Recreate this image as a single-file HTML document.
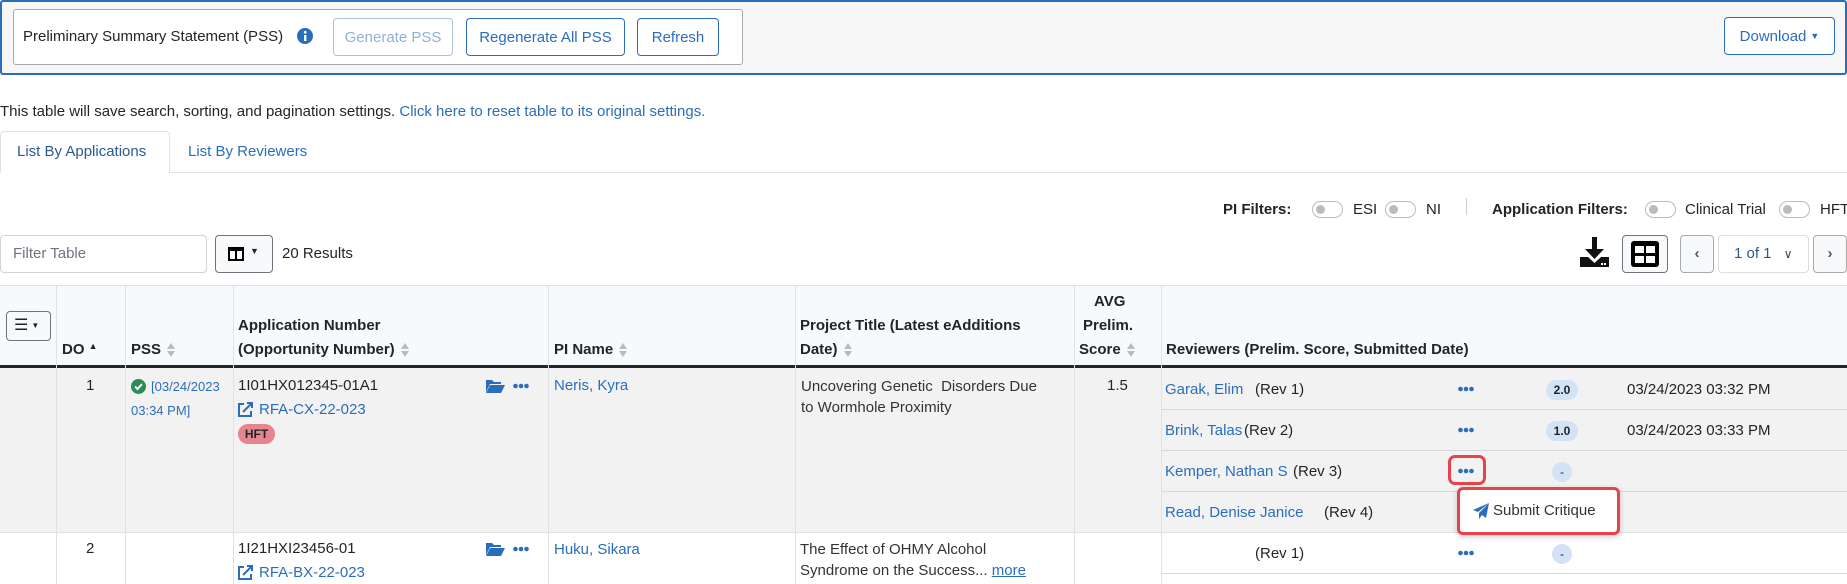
<!DOCTYPE html>
<html><head><meta charset="utf-8"><style>
*{box-sizing:border-box;margin:0;padding:0}
body{width:1847px;height:584px;overflow:hidden;background:#fff;font-family:"Liberation Sans",sans-serif;font-size:15px;color:#212529;position:relative}
.a{position:absolute;white-space:nowrap}
.lk{color:#2a6ebb}
.btn{position:absolute;border:1px solid #2a6ebb;border-radius:4px;color:#2a6ebb;display:flex;align-items:center;justify-content:center;background:#fff;font-size:15px}
.b{font-weight:bold}
.tg{position:absolute;width:31px;height:17px;border:1px solid #bbb;border-radius:9px;top:201px}
.tg:after{content:"";position:absolute;left:3px;top:3px;width:9px;height:9px;border-radius:50%;background:#bbb}
.vl{position:absolute;width:1px;background:#dee2e6}
.hl{position:absolute;height:1px;background:#dee2e6}
.dots{position:absolute;width:16px;height:6px}
.sc{position:absolute;background:#d3e3f5;border-radius:10px;font-size:12px;font-weight:bold;display:flex;align-items:center;justify-content:center;height:20px}
.sort{display:inline-block;width:8px;height:14px;vertical-align:middle;margin-left:6px}
</style></head><body>
<svg width="0" height="0" style="position:absolute"><defs><g id="so"><polygon points="0,6 4,0 8,6" fill="#bbb"/><polygon points="0,8 4,14 8,8" fill="#bbb"/></g><g id="dt"><circle cx="2.5" cy="3" r="2.3" fill="#2a6ebb"/><circle cx="8" cy="3" r="2.3" fill="#2a6ebb"/><circle cx="13.5" cy="3" r="2.3" fill="#2a6ebb"/></g></defs></svg>
<!-- top panel -->
<div class="a" style="left:0;top:0;width:1847px;height:75px;background:#f7f7f7;border:2px solid #2a6ebb;border-radius:3px"></div>
<div class="a" style="left:13px;top:9px;width:730px;height:56px;background:#fff;border:1px solid #aaa;border-radius:3px"></div>
<div class="a" style="left:23px;top:28px;font-size:15px">Preliminary Summary Statement (PSS)</div>
<svg class="a" style="left:297px;top:28px" width="16" height="16" viewBox="0 0 16 16"><circle cx="8" cy="8" r="8" fill="#2a6ebb"/><rect x="7" y="7" width="2.4" height="6" fill="#fff"/><circle cx="8.2" cy="4.3" r="1.4" fill="#fff"/></svg>
<div class="btn" style="left:333px;top:18px;width:120px;height:38px;color:#8fb0d8;border-color:#a9c3e3">Generate PSS</div>
<div class="btn" style="left:466px;top:18px;width:159px;height:38px">Regenerate All PSS</div>
<div class="btn" style="left:637px;top:18px;width:82px;height:38px">Refresh</div>
<div class="btn" style="left:1724px;top:17px;width:111px;height:38px">Download <span style="font-size:9px;margin-left:4px">▼</span></div>

<div class="a" style="left:0;top:103px">This table will save search, sorting, and pagination settings. <span class="lk">Click here to reset table to its original settings.</span></div>
<!-- tabs -->
<div class="hl" style="left:0;top:172px;width:1847px"></div>
<div class="a" style="left:0;top:131px;width:170px;height:42px;border:1px solid #dee2e6;border-bottom:none;border-radius:4px 4px 0 0;background:#fff"></div>
<div class="a lk" style="left:17px;top:143px;color:#2a5a8f">List By Applications</div>
<div class="a lk" style="left:188px;top:143px">List By Reviewers</div>
<!-- filters -->
<div class="a b" style="left:1223px;top:201px">PI Filters:</div>
<div class="tg" style="left:1312px"></div><div class="a" style="left:1353px;top:201px">ESI</div>
<div class="tg" style="left:1385px"></div><div class="a" style="left:1426px;top:201px">NI</div>
<div class="a" style="left:1466px;top:198px;width:1px;height:17px;background:#ccc"></div>
<div class="a b" style="left:1492px;top:201px">Application Filters:</div>
<div class="tg" style="left:1645px"></div><div class="a" style="left:1685px;top:201px">Clinical Trial</div>
<div class="tg" style="left:1779px"></div><div class="a" style="left:1820px;top:201px">HFT</div>
<!-- toolbar -->
<div class="a" style="left:0;top:235px;width:207px;height:38px;border:1px solid #ced4da;border-radius:4px"></div>
<div class="a" style="left:13px;top:245px;color:#6c757d">Filter Table</div>
<div class="a" style="left:215px;top:235px;width:58px;height:38px;border:1px solid #6c757d;border-radius:4px;background:#f8f9fa"></div>
<svg class="a" style="left:228px;top:247px" width="16" height="14"><rect x="1" y="1" width="14" height="12" fill="none" stroke="#000" stroke-width="2"/><rect x="1" y="1" width="14" height="3" fill="#000"/><line x1="8" y1="1" x2="8" y2="13" stroke="#000" stroke-width="2"/></svg>
<div class="a" style="left:250px;top:246px;font-size:9px">▼</div>
<div class="a" style="left:282px;top:245px">20 Results</div>
<svg class="a" style="left:1580px;top:237px" width="30" height="32" viewBox="0 0 30 32"><rect x="12" y="0" width="5" height="14" fill="#111"/><polygon points="5,12 24,12 14.5,22" fill="#111"/><polygon points="0,20 8,20 14.5,26 21,20 29,20 29,30 0,30" fill="#111"/><rect x="21" y="26" width="2" height="2" fill="#fff"/><rect x="24" y="26" width="2" height="2" fill="#fff"/></svg>
<div class="a" style="left:1622px;top:235px;width:46px;height:38px;border:1px solid #6c757d;border-radius:4px;background:#f8f9fa"></div>
<svg class="a" style="left:1631px;top:241px" width="28" height="26"><rect x="0" y="0" width="28" height="26" rx="3" fill="#000"/><rect x="4" y="5" width="9" height="7" fill="#fff"/><rect x="15" y="5" width="9" height="7" fill="#fff"/><rect x="4" y="15" width="9" height="7" fill="#fff"/><rect x="15" y="15" width="9" height="7" fill="#fff"/></svg>
<div class="a" style="left:1680px;top:235px;width:34px;height:38px;border:1px solid #aaa;border-radius:4px;background:#f8f9fa;text-align:center;line-height:36px;font-weight:bold;color:#555">‹</div>
<div class="a" style="left:1718px;top:235px;width:91px;height:38px;border:1px solid #ddd;border-radius:4px;line-height:36px;padding-left:15px;color:#2a5a8f">1 of 1 <span style="color:#444;margin-left:8px;font-size:12px">∨</span></div>
<div class="a" style="left:1813px;top:235px;width:34px;height:38px;border:1px solid #aaa;border-radius:4px;background:#f8f9fa;text-align:center;line-height:36px;font-weight:bold;color:#555">›</div>
<!-- table header -->
<div class="a" style="left:0;top:285px;width:1847px;height:80px;background:#f8f9fa;border-top:1px solid #dee2e6"></div>
<div class="a" style="left:0;top:365px;width:1847px;height:3px;background:#212529"></div>
<div class="a" style="left:0;top:368px;width:1847px;height:164px;background:#f2f2f2"></div>
<div class="hl" style="left:0;top:532px;width:1847px"></div>
<div class="vl" style="left:56px;top:285px;height:299px"></div>
<div class="vl" style="left:125px;top:285px;height:299px"></div>
<div class="vl" style="left:233px;top:285px;height:299px"></div>
<div class="vl" style="left:548px;top:285px;height:299px"></div>
<div class="vl" style="left:795px;top:285px;height:299px"></div>
<div class="vl" style="left:1074px;top:285px;height:299px"></div>
<div class="vl" style="left:1161px;top:285px;height:299px"></div>
<div class="a" style="left:6px;top:311px;width:45px;height:30px;border:1px solid #6c757d;border-radius:4px;font-size:16px;padding-left:7px;line-height:27px">☰<span style="font-size:8px;margin-left:3px;vertical-align:middle">▼</span></div>
<div class="a b" style="left:62px;top:341px">DO <span style="font-size:9px;vertical-align:top">▲</span></div>
<div class="a b" style="left:131px;top:341px">PSS<svg class="sort"><use href="#so"/></svg></div>
<div class="a b" style="left:238px;top:317px">Application Number</div>
<div class="a b" style="left:238px;top:341px">(Opportunity Number)<svg class="sort"><use href="#so"/></svg></div>
<div class="a b" style="left:554px;top:341px">PI Name<svg class="sort"><use href="#so"/></svg></div>
<div class="a b" style="left:800px;top:317px">Project Title (Latest eAdditions</div>
<div class="a b" style="left:800px;top:341px">Date)<svg class="sort"><use href="#so"/></svg></div>
<div class="a b" style="left:1094px;top:293px">AVG</div>
<div class="a b" style="left:1083px;top:317px">Prelim.</div>
<div class="a b" style="left:1079px;top:341px">Score<svg class="sort"><use href="#so"/></svg></div>
<div class="a b" style="left:1166px;top:341px">Reviewers (Prelim. Score, Submitted Date)</div>
<!-- row 1 -->
<div class="a" style="left:86px;top:377px">1</div>
<svg class="a" style="left:131px;top:379px" width="15" height="15"><circle cx="7.5" cy="7.5" r="7.5" fill="#2e8b57"/><polyline points="4,7.5 6.5,10 11,5" fill="none" stroke="#fff" stroke-width="2"/></svg>
<div class="a lk" style="left:151px;top:379px;font-size:13px">[03/24/2023</div>
<div class="a lk" style="left:131px;top:403px;font-size:13px">03:34 PM]</div>
<div class="a" style="left:238px;top:377px">1I01HX012345-01A1</div>
<svg class="a" style="left:486px;top:379px" width="19" height="14" viewBox="0 0 19 14"><path d="M0 1h6l2 2h7v2H4L0 13z" fill="#2a6ebb"/><path d="M4 6h15l-4 8H0z" fill="#2a6ebb"/></svg>
<svg class="dots" style="left:513px;top:383px"><use href="#dt"/></svg>
<svg class="a" style="left:238px;top:402px" width="15" height="15" viewBox="0 0 15 15"><path d="M6 2H1v12h12V9" fill="none" stroke="#2a6ebb" stroke-width="2"/><path d="M5 10L14 1M9 1h5v5" fill="none" stroke="#2a6ebb" stroke-width="2"/></svg>
<div class="a lk" style="left:259px;top:401px">RFA-CX-22-023</div>
<div class="a" style="left:238px;top:424px;width:37px;height:20px;border-radius:10px;background:#e8848d;font-size:12px;font-weight:bold;text-align:center;line-height:20px">HFT</div>
<div class="a lk" style="left:554px;top:377px">Neris, Kyra</div>
<div class="a" style="left:801px;top:378px;color:#333">Uncovering Genetic&nbsp; Disorders Due</div>
<div class="a" style="left:801px;top:399px;color:#333">to Wormhole Proximity</div>
<div class="a" style="left:1107px;top:377px">1.5</div>
<div class="hl" style="left:1161px;top:409px;width:686px;background:#d6d8db"></div>
<div class="hl" style="left:1161px;top:450px;width:686px;background:#d6d8db"></div>
<div class="hl" style="left:1161px;top:491px;width:686px;background:#d6d8db"></div>
<div class="a lk" style="left:1165px;top:381px">Garak, Elim</div><div class="a" style="left:1255px;top:381px">(Rev 1)</div>
<svg class="dots" style="left:1458px;top:386px"><use href="#dt"/></svg>
<div class="sc" style="left:1546px;top:380px;width:32px">2.0</div>
<div class="a" style="left:1627px;top:381px">03/24/2023 03:32 PM</div>
<div class="a lk" style="left:1165px;top:422px">Brink, Talas</div><div class="a" style="left:1244px;top:422px">(Rev 2)</div>
<svg class="dots" style="left:1458px;top:427px"><use href="#dt"/></svg>
<div class="sc" style="left:1546px;top:421px;width:32px">1.0</div>
<div class="a" style="left:1627px;top:422px">03/24/2023 03:33 PM</div>
<div class="a lk" style="left:1165px;top:463px">Kemper, Nathan S</div><div class="a" style="left:1293px;top:463px">(Rev 3)</div>
<div class="a" style="left:1448px;top:455px;width:38px;height:30px;border:3px solid #e8434a;border-radius:7px"></div>
<svg class="dots" style="left:1458px;top:468px"><use href="#dt"/></svg>
<div class="sc" style="left:1552px;top:462px;width:20px;font-weight:normal">-</div>
<div class="a lk" style="left:1165px;top:504px">Read, Denise Janice</div><div class="a" style="left:1324px;top:504px">(Rev 4)</div>
<div class="a" style="left:1457px;top:487px;width:163px;height:48px;border:3px solid #e8434a;border-radius:6px;background:#fff;box-shadow:0 2px 6px rgba(0,0,0,.2)"></div>
<svg class="a" style="left:1473px;top:503px" width="16" height="16" viewBox="0 0 16 16"><path d="M16 0L0 7l5 2zM16 0L6 10v6l3-4 4 3z" fill="#2a6ebb"/></svg>
<div class="a" style="left:1493px;top:502px;color:#333">Submit Critique</div>
<!-- row 2 -->
<div class="a" style="left:86px;top:540px">2</div>
<div class="a" style="left:238px;top:540px">1I21HXI23456-01</div>
<svg class="a" style="left:486px;top:542px" width="19" height="14" viewBox="0 0 19 14"><path d="M0 1h6l2 2h7v2H4L0 13z" fill="#2a6ebb"/><path d="M4 6h15l-4 8H0z" fill="#2a6ebb"/></svg>
<svg class="dots" style="left:513px;top:546px"><use href="#dt"/></svg>
<svg class="a" style="left:238px;top:565px" width="15" height="15" viewBox="0 0 15 15"><path d="M6 2H1v12h12V9" fill="none" stroke="#2a6ebb" stroke-width="2"/><path d="M5 10L14 1M9 1h5v5" fill="none" stroke="#2a6ebb" stroke-width="2"/></svg>
<div class="a lk" style="left:259px;top:564px">RFA-BX-22-023</div>
<div class="a lk" style="left:554px;top:541px">Huku, Sikara</div>
<div class="a" style="left:800px;top:541px;color:#333">The Effect of OHMY Alcohol</div>
<div class="a" style="left:800px;top:562px;color:#333">Syndrome on the Success... <span class="lk" style="text-decoration:underline">more</span></div>
<div class="a" style="left:1255px;top:545px">(Rev 1)</div>
<svg class="dots" style="left:1458px;top:550px"><use href="#dt"/></svg>
<div class="sc" style="left:1552px;top:544px;width:20px;font-weight:normal">-</div>
<div class="hl" style="left:1161px;top:573px;width:686px;background:#d6d8db"></div>
</body></html>
